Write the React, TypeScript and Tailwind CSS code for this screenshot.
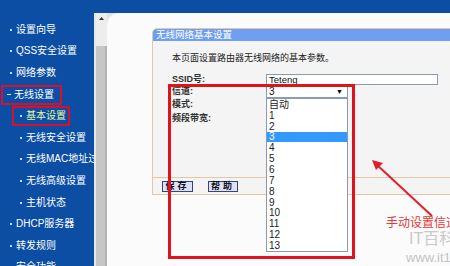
import React from "react";

const FONT = '"Liberation Sans", "Noto Sans CJK SC", sans-serif';

type Item = { text: string; indent: number; dash?: boolean; box?: boolean; active?: boolean };

const items: Item[] = [
  { text: "设置向导", indent: 0 },
  { text: "QSS安全设置", indent: 0 },
  { text: "网络参数", indent: 0 },
  { text: "无线设置", indent: 0, dash: true, box: true },
  { text: "基本设置", indent: 1, box: true, active: true },
  { text: "无线安全设置", indent: 1 },
  { text: "无线MAC地址过滤", indent: 1 },
  { text: "无线高级设置", indent: 1 },
  { text: "主机状态", indent: 1 },
  { text: "DHCP服务器", indent: 0 },
  { text: "转发规则", indent: 0 },
  { text: "安全功能", indent: 0 },
];

function Sidebar() {
  return (
    <div className="w-[94px] shrink-0 overflow-hidden flex flex-col pt-[19px]">
      {items.map((it, i) => {
        if (it.box && !it.indent) {
          return (
            <div key={i} className="h-[21.6px] shrink-0 flex items-center pl-[1px]">
              <div className="h-[20px] w-[61px] border-2 border-[#d8102c] flex items-center pl-[4px] gap-[3px] whitespace-nowrap">
                <span className="w-[4px] h-[1.5px] bg-[#cfe6ff]" />
                <span className="text-[10px] leading-[12px] text-white">{it.text}</span>
              </div>
            </div>
          );
        }
        if (it.box) {
          return (
            <div key={i} className="h-[21.6px] shrink-0 flex items-center pl-[12px]">
              <div className="h-[20px] w-[58px] border-2 border-[#d8102c] flex items-center pl-[6px] gap-[4px] whitespace-nowrap">
                <span className="w-[2px] h-[2px] bg-[#bfe0ff]" />
                <span className="text-[10px] leading-[12px] text-[#e9f7a6]">{it.text}</span>
              </div>
            </div>
          );
        }
        return (
          <div
            key={i}
            className={
              "h-[21.6px] shrink-0 flex items-center gap-[4px] whitespace-nowrap " +
              (it.indent ? "pl-[20px]" : "pl-[10px]")
            }
          >
            <span className="w-[2px] h-[2px] bg-[#bfe0ff] shrink-0" />
            <span className="text-[10px] leading-[12px] text-white">{it.text}</span>
          </div>
        );
      })}
    </div>
  );
}

function Scrollbar() {
  return (
    <div className="w-[13px] shrink-0 flex flex-col border-l-[2px] border-[#e6e6e6] bg-[#c9c9c9]">
      <div className="h-[33px] bg-[#ededed] flex justify-center pt-[4px]">
        <svg width="5" height="3" viewBox="0 0 5 3">
          <polygon points="2.5,0 5,3 0,3" fill="#333" />
        </svg>
      </div>
      <div className="flex-1 bg-[#c6c6c6] border-r-[2px] border-[#b2b2b2]" />
    </div>
  );
}

const channels = ["自动", "1", "2", "3", "4", "5", "6", "7", "8", "9", "10", "11", "12", "13"];

function SettingsBox() {
  return (
    <div className="w-[320px] shrink-0 border border-[#e3c7a6] rounded-tl-[5px] bg-[#f4f4f4] overflow-visible">
      <div className="h-[12px] bg-[#6f9ff0] rounded-tl-[4px] flex items-center pl-[3px]">
        <span className="text-[9.5px] leading-[12px] text-white whitespace-nowrap">无线网络基本设置</span>
      </div>
      <div className="h-[136px] pl-[19px] pt-[11px] flex flex-col text-[#222]">
        <div className="h-[12px] text-[9px] leading-[12px] whitespace-nowrap">本页面设置路由器无线网络的基本参数。</div>
        <div className="mt-[10px] h-[11px] flex items-center">
          <div className="w-[94px] text-[9px] leading-[11px] font-bold text-[#333]">SSID号:</div>
          <div className="w-[172px] h-[11px] bg-white border border-[#8a9bb0] flex items-center pl-[2px]">
            <span className="text-[9.5px] leading-[10px] text-[#111]">Teteng</span>
          </div>
        </div>
        <div className="h-[13px] flex items-center">
          <div className="w-[94px] text-[9px] leading-[11px] font-bold text-[#333]">信道:</div>
          <div className="relative w-[82px] h-[13px] bg-white border border-[#8a9bb0] flex items-center justify-between pl-[2px] pr-[4px]">
            <span className="text-[10px] leading-[11px] text-[#111]">3</span>
            <span className="text-[7px] leading-[8px] text-black">▼</span>
            <div className="absolute left-[-1px] top-[12px] w-[82px] bg-white border border-[#8a9bb0] flex flex-col z-10">
              {channels.map((c) => (
                <div
                  key={c}
                  className={
                    "h-[10.85px] flex items-center pl-[2px] text-[10px] leading-[11px] " +
                    (c === "3" ? "bg-[#3399ff] text-white" : "text-[#222]")
                  }
                >
                  {c}
                </div>
              ))}
            </div>
          </div>
        </div>
        <div className="h-[13px] flex items-center">
          <div className="text-[9px] leading-[11px] font-bold text-[#333]">模式:</div>
        </div>
        <div className="h-[14px] flex items-center">
          <div className="text-[9px] leading-[11px] font-bold text-[#333]">频段带宽:</div>
        </div>
      </div>
      <div className="h-[17px] border-t border-[#e3c7a6] flex items-center pl-[9px] gap-[15px]">
        <button className="w-[31px] h-[11px] bg-[#dde1f3] border border-[#34437e] flex items-center justify-center text-[9px] leading-[10px] tracking-[3px] text-[#112] font-bold">
          保存
        </button>
        <button className="w-[30px] h-[11px] bg-[#dde1f3] border border-[#34437e] flex items-center justify-center text-[9px] leading-[10px] tracking-[3px] text-[#112] font-bold">
          帮助
        </button>
      </div>
    </div>
  );
}

export default function App() {
  return (
    <div
      className="relative w-[450px] h-[266px] overflow-hidden flex bg-[#0c4ea4]"
      style={{ fontFamily: FONT }}
    >
      <Sidebar />
      <div className="flex-1 min-w-0 flex flex-col pt-[13px]">
        <div className="flex flex-1 min-h-0">
          <Scrollbar />
          <div className="flex-1 min-w-0 bg-[#e2e2e2]">
            <div className="h-full bg-[#fbfbfb] rounded-tl-[12px] pl-[45px] pt-[15px] overflow-hidden">
              <SettingsBox />
            </div>
          </div>
        </div>
      </div>

      {/* annotation: red rectangle */}
      <div className="absolute left-[168px] top-[84px] w-[187px] h-[175px] border-[3px] border-[#e0121c] z-20 pointer-events-none" />

      {/* annotation arrow */}
      <svg className="absolute left-0 top-0 z-20 pointer-events-none" width="450" height="266" viewBox="0 0 450 266">
        <line x1="432" y1="216" x2="376" y2="164" stroke="#e0202a" strokeWidth="2" />
        <polygon points="372,160 383,163 376,170" fill="#e0202a" />
      </svg>

      <div className="absolute left-[386px] top-[215px] z-20 text-[12px] leading-[16px] text-[#e23a3a] whitespace-nowrap">
        手动设置信道
      </div>

      {/* watermark */}
      <div className="absolute left-[409px] top-[230px] z-20 text-[16px] leading-[18px] text-[#c9c9c9] whitespace-nowrap">
        IT百科
      </div>
      <div className="absolute left-[406px] top-[250px] z-20 text-[13px] leading-[15px] text-[#c4c4c4] whitespace-nowrap">
        www.it168.com
      </div>
    </div>
  );
}
